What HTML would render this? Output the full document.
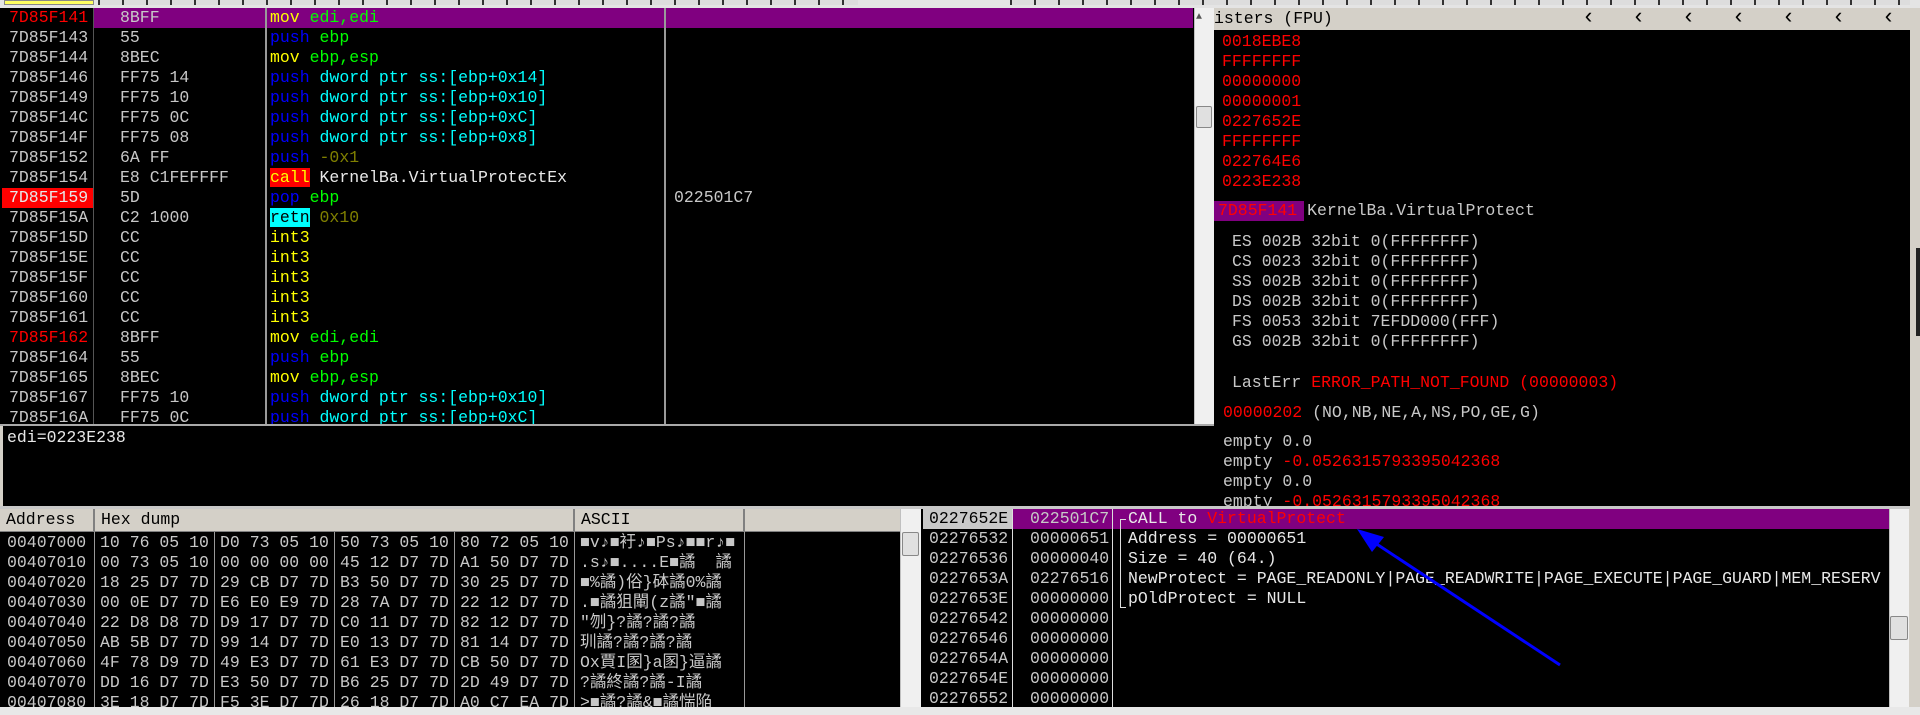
<!DOCTYPE html>
<html><head><meta charset="utf-8"><style>
*{margin:0;padding:0;box-sizing:border-box}
body{width:1920px;height:715px;background:#d4d0c8;position:relative;overflow:hidden;font-family:"Liberation Mono","WenQuanYi Zen Hei",monospace;font-size:16.5px;color:#c8c8c8}
.a{position:absolute;white-space:pre;line-height:20px;height:20px}
.p{position:absolute}
.bk{background:#000}
.y{color:#ffff00}.b{color:#0000ff}.g{color:#00ff00}.c{color:#00ffff}.o{color:#808000}.r{color:#ff0000}.w{color:#e8e8e8}
.vl{position:absolute;width:2px;background:#9a9a9a}
.hdr{position:absolute;background:#d4d0c8;color:#000;line-height:22px;padding-left:6px;border-right:2px solid #808080;border-bottom:1px solid #808080}
.sb{position:absolute;background:#f0f0f0;border-left:1px solid #c0c0c0}
.th{position:absolute;background:#e0e0e0;border:1px solid #888;border-radius:2px}
</style></head><body>
<div class="p" style="left:0;top:0;width:1920px;height:8px;background:#e4e4e4"></div>
<div class="p" style="left:4px;top:0;width:90px;height:5px;background:#ffff60;border:1px solid #888"></div>
<div class="p" style="left:98px;top:0;width:760px;height:5px;background:repeating-linear-gradient(90deg,#333 0 2px,#ddd 2px 24px)"></div>
<div class="p" style="left:1010px;top:0;width:900px;height:5px;background:repeating-linear-gradient(90deg,#333 0 2px,#ddd 2px 24px)"></div>

<div class="p bk" style="left:0;top:8px;width:1194px;height:416px"></div>
<div class="p" style="left:94px;top:8px;width:1099px;height:20px;background:#800080"></div>
<div class="p" style="left:2px;top:188px;width:92px;height:20px;background:#ff0000"></div>
<div class="vl" style="left:265px;top:8px;height:416px"></div>
<div class="vl" style="left:664px;top:8px;height:416px"></div>
<div class="vl" style="left:93px;top:8px;height:416px;background:#555;width:1px"></div>
<div id="dis"></div>
<div class="p" style="left:0;top:424px;width:1214px;height:2px;background:#aaa"></div>
<div class="sb" style="left:1194px;top:8px;width:20px;height:416px"></div>
<div class="th" style="left:1196px;top:106px;width:16px;height:22px"></div>

<div class="p bk" style="left:3px;top:426px;width:1212px;height:80px"></div>
<div class="a w" style="left:7px;top:428px">edi=0223E238</div>

<div class="p" style="left:1214px;top:8px;width:696px;height:22px;background:#d4d0c8;color:#000;line-height:22px;white-space:pre">isters (FPU)</div>
<div class="p" style="left:1196px;top:12px;font-size:10px;color:#555">▲</div>
<div id="arr"></div>
<div class="p bk" style="left:1214px;top:30px;width:696px;height:476px"></div>
<div class="p" style="left:1214px;top:201px;width:90px;height:20px;background:#800080"></div>
<div id="reg"></div>
<div class="p" style="left:0;top:506px;width:1910px;height:3px;background:#c8c8c8"></div>

<div class="p bk" style="left:0;top:509px;width:900px;height:198px"></div>
<div class="hdr" style="left:0;top:509px;width:95px;height:23px">Address</div>
<div class="hdr" style="left:95px;top:509px;width:480px;height:23px">Hex dump</div>
<div class="hdr" style="left:575px;top:509px;width:170px;height:23px">ASCII</div>
<div class="hdr" style="left:745px;top:509px;width:155px;height:23px;border-right:none"></div>
<div class="vl" style="left:94px;top:532px;height:175px;width:1px;background:#999"></div>
<div class="vl" style="left:214px;top:532px;height:175px;width:1px;background:#999"></div>
<div class="vl" style="left:334px;top:532px;height:175px;width:1px;background:#999"></div>
<div class="vl" style="left:454px;top:532px;height:175px;width:1px;background:#999"></div>
<div class="vl" style="left:574px;top:532px;height:175px;width:1px;background:#999"></div>
<div class="vl" style="left:744px;top:532px;height:175px;width:1px;background:#999"></div>
<div id="dump"></div>
<div class="sb" style="left:900px;top:509px;width:21px;height:198px"></div>
<div class="th" style="left:902px;top:532px;width:17px;height:24px"></div>

<div class="p bk" style="left:921px;top:509px;width:968px;height:198px"></div>
<div class="p" style="left:923px;top:509px;width:90px;height:20px;background:#c8c8c8"></div>
<div class="p" style="left:1013px;top:509px;width:876px;height:20px;background:#800080"></div>
<div class="vl" style="left:1012px;top:509px;height:198px;width:1px;background:#ddd"></div>
<div class="vl" style="left:1112px;top:509px;height:198px;width:1px;background:#ddd"></div>
<div class="p" style="left:1120px;top:519px;width:1px;height:89px;background:#ddd"></div>
<div class="p" style="left:1120px;top:519px;width:6px;height:1px;background:#ddd"></div>
<div class="p" style="left:1120px;top:607px;width:6px;height:1px;background:#ddd"></div>
<div id="stk"></div>
<div class="sb" style="left:1889px;top:509px;width:20px;height:198px"></div>
<div class="th" style="left:1890px;top:616px;width:18px;height:24px"></div>
<div class="p" style="left:0;top:707px;width:1920px;height:8px;background:#e8e8e8"></div>
<div class="p" style="left:1916px;top:248px;width:4px;height:88px;background:#222"></div>

<svg class="p" style="left:0;top:0" width="1920" height="715">
<line x1="1560" y1="665" x2="1366" y2="537" stroke="#0000ff" stroke-width="3"/>
<polygon points="1357,529 1384,537 1372,552" fill="#0000ff"/>
</svg>

<script>
function row(id,x,y,html,cls){var d=document.createElement('div');d.className='a '+(cls||'');d.style.left=x+'px';d.style.top=y+'px';d.innerHTML=html;document.getElementById(id).appendChild(d);}
var D=[
['7D85F141','8BFF','<span class=y>mov</span> <span class=g>edi,edi</span>','','r'],
['7D85F143','55','<span class=b>push</span> <span class=g>ebp</span>'],
['7D85F144','8BEC','<span class=y>mov</span> <span class=g>ebp,esp</span>'],
['7D85F146','FF75 14','<span class=b>push</span> <span class=c>dword ptr ss:[ebp+0x14]</span>'],
['7D85F149','FF75 10','<span class=b>push</span> <span class=c>dword ptr ss:[ebp+0x10]</span>'],
['7D85F14C','FF75 0C','<span class=b>push</span> <span class=c>dword ptr ss:[ebp+0xC]</span>'],
['7D85F14F','FF75 08','<span class=b>push</span> <span class=c>dword ptr ss:[ebp+0x8]</span>'],
['7D85F152','6A FF','<span class=b>push</span> <span class=o>-0x1</span>'],
['7D85F154','E8 C1FEFFFF','<span style="background:#ff0000;color:#ffff00">call</span> <span class=w>KernelBa.VirtualProtectEx</span>'],
['7D85F159','5D','<span class=b>pop</span> <span class=g>ebp</span>','022501C7','w'],
['7D85F15A','C2 1000','<span style="background:#00ffff;color:#000">retn</span> <span class=o>0x10</span>'],
['7D85F15D','CC','<span class=y>int3</span>'],
['7D85F15E','CC','<span class=y>int3</span>'],
['7D85F15F','CC','<span class=y>int3</span>'],
['7D85F160','CC','<span class=y>int3</span>'],
['7D85F161','CC','<span class=y>int3</span>'],
['7D85F162','8BFF','<span class=y>mov</span> <span class=g>edi,edi</span>','','r'],
['7D85F164','55','<span class=b>push</span> <span class=g>ebp</span>'],
['7D85F165','8BEC','<span class=y>mov</span> <span class=g>ebp,esp</span>'],
['7D85F167','FF75 10','<span class=b>push</span> <span class=c>dword ptr ss:[ebp+0x10]</span>'],
['7D85F16A','FF75 0C','<span class=b>push</span> <span class=c>dword ptr ss:[ebp+0xC]</span>']];
D.forEach(function(r,i){var y=8+20*i;row('dis',9,y,r[0],r[4]||'');row('dis',120,y,r[1]);row('dis',270,y,r[2]);if(r[3])row('dis',674,y,r[3]);});
['0018EBE8','FFFFFFFF','00000000','00000001','0227652E','FFFFFFFF','022764E6','0223E238'].forEach(function(v,i){row('reg',1222,32+20*i,v,'r');});
row('reg',1218,201,'<span class=r>7D85F141</span> KernelBa.VirtualProtect');
['ES 002B 32bit 0(FFFFFFFF)','CS 0023 32bit 0(FFFFFFFF)','SS 002B 32bit 0(FFFFFFFF)','DS 002B 32bit 0(FFFFFFFF)','FS 0053 32bit 7EFDD000(FFF)','GS 002B 32bit 0(FFFFFFFF)'].forEach(function(v,i){row('reg',1232,232+20*i,v);});
row('reg',1232,373,'LastErr <span class=r>ERROR_PATH_NOT_FOUND (00000003)</span>');
row('reg',1223,403,'<span class=r>00000202</span> (NO,NB,NE,A,NS,PO,GE,G)');
row('reg',1223,432,'empty 0.0');row('reg',1223,452,'empty <span class=r>-0.0526315793395042368</span>');
row('reg',1223,472,'empty 0.0');row('reg',1223,492,'empty <span class=r>-0.0526315793395042368</span>');
for(var k=0;k<7;k++){row('arr',1582+50*k,8,'‹','');}
document.querySelectorAll('#arr .a').forEach(function(e){e.style.color='#000';e.style.fontSize='22px';});
var H=[['00407000','10 76 05 10','D0 73 05 10','50 73 05 10','80 72 05 10','■v♪■衧♪■Ps♪■■r♪■'],
['00407010','00 73 05 10','00 00 00 00','45 12 D7 7D','A1 50 D7 7D','.s♪■....E■譎  譎'],
['00407020','18 25 D7 7D','29 CB D7 7D','B3 50 D7 7D','30 25 D7 7D','■%譎)俗}砵譎0%譎'],
['00407030','00 0E D7 7D','E6 E0 E9 7D','28 7A D7 7D','22 12 D7 7D','.■譎狙閳(z譎"■譎'],
['00407040','22 D8 D8 7D','D9 17 D7 7D','C0 11 D7 7D','82 12 D7 7D','"刎}?譎?譎?譎'],
['00407050','AB 5B D7 7D','99 14 D7 7D','E0 13 D7 7D','81 14 D7 7D','玔譎?譎?譎?譎'],
['00407060','4F 78 D9 7D','49 E3 D7 7D','61 E3 D7 7D','CB 50 D7 7D','Ox賈I圂}a圂}逼譎'],
['00407070','DD 16 D7 7D','E3 50 D7 7D','B6 25 D7 7D','2D 49 D7 7D','?譎終譎?譎-I譎'],
['00407080','3E 18 D7 7D','F5 3E D7 7D','26 18 D7 7D','A0 C7 EA 7D','>■譎?譎&■譎惴陥']];
H.forEach(function(r,i){var y=533+20*i;row('dump',7,y,r[0]);row('dump',100,y,r[1]);row('dump',220,y,r[2]);row('dump',340,y,r[3]);row('dump',460,y,r[4]);row('dump',580,y,r[5]);});
var S=[['0227652E','022501C7','CALL to <span class=r>VirtualProtect</span>'],['02276532','00000651','Address = 00000651'],['02276536','00000040','Size = 40 (64.)'],['0227653A','02276516','NewProtect = PAGE_READONLY|PAGE_READWRITE|PAGE_EXECUTE|PAGE_GUARD|MEM_RESERV'],['0227653E','00000000','pOldProtect = NULL'],['02276542','00000000',''],['02276546','00000000',''],['0227654A','00000000',''],['0227654E','00000000',''],['02276552','00000000','']];
S.forEach(function(r,i){var y=509+20*i;row('stk',929,y,r[0]);row('stk',1030,y,r[1]);row('stk',1128,y,r[2],'w');});
document.querySelector('#stk .a').style.color='#000';
</script>
</body></html>
